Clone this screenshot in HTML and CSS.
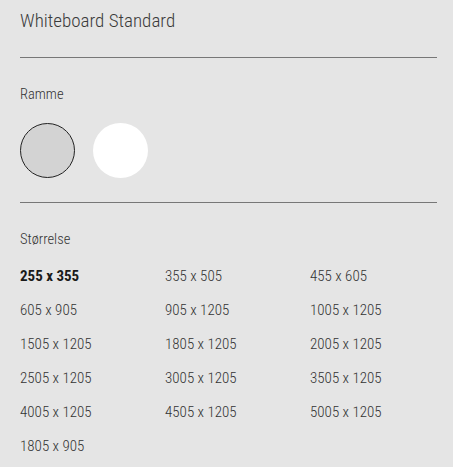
FILE: index.html
```html
<!DOCTYPE html>
<html>
<head>
<meta charset="utf-8">
<link rel="stylesheet" href="styles.css">
</head>
<body>
<div class="panel">
  <h1 class="title">Whiteboard Standard</h1>
  <hr class="rule">
  <section class="section">
    <div class="label">Ramme</div>
    <div class="swatches">
      <span class="swatch swatch-grey selected"></span>
      <span class="swatch swatch-white"></span>
    </div>
  </section>
  <hr class="rule">
  <section class="section section-sizes">
    <div class="label">Størrelse</div>
    <div class="sizes">
      <span class="size active">255 x 355</span>
      <span class="size">355 x 505</span>
      <span class="size">455 x 605</span>
      <span class="size">605 x 905</span>
      <span class="size">905 x 1205</span>
      <span class="size">1005 x 1205</span>
      <span class="size">1505 x 1205</span>
      <span class="size">1805 x 1205</span>
      <span class="size">2005 x 1205</span>
      <span class="size">2505 x 1205</span>
      <span class="size">3005 x 1205</span>
      <span class="size">3505 x 1205</span>
      <span class="size">4005 x 1205</span>
      <span class="size">4505 x 1205</span>
      <span class="size">5005 x 1205</span>
      <span class="size">1805 x 905</span>
    </div>
  </section>
</div>
</body>
</html>
```
FILE: styles.css
```css
html, body {
  margin: 0;
  padding: 0;
  background: #e5e5e5;
}
body {
  font-family: "Roboto Condensed", "Roboto", sans-serif;
  font-weight: 300;
  color: #333;
}
.panel {
  padding: 9px 16px 0 20px;
}
.title {
  margin: 0 0 3px 0;
  font-size: 19px;
  font-weight: 300;
  line-height: 24px;
  color: #3a3a3a;
}
.rule {
  margin: 24px 0 0 0;
  border: 0;
  border-top: 1px solid #777;
  height: 0;
}
.section {
  padding-top: 28px;
}
.section-sizes {
  padding-top: 28px;
}
.label {
  font-size: 14.5px;
  line-height: 18px;
  color: #333;
}
.swatches {
  display: flex;
  gap: 18px;
  margin-top: 19px;
}
.swatch {
  width: 55px;
  height: 55px;
  border-radius: 50%;
  box-sizing: border-box;
}
.swatch-grey {
  background: #d3d3d3;
  border: 1px solid #222;
}
.swatch-white {
  background: #fff;
}
.sizes {
  display: grid;
  grid-template-columns: 145px 145px 145px;
  grid-auto-rows: 34px;
  margin-top: 18px;
}
.size {
  font-size: 15px;
  line-height: 18px;
  color: #333;
}
.size.active {
  font-weight: 700;
  color: #1a1a1a;
}
```
